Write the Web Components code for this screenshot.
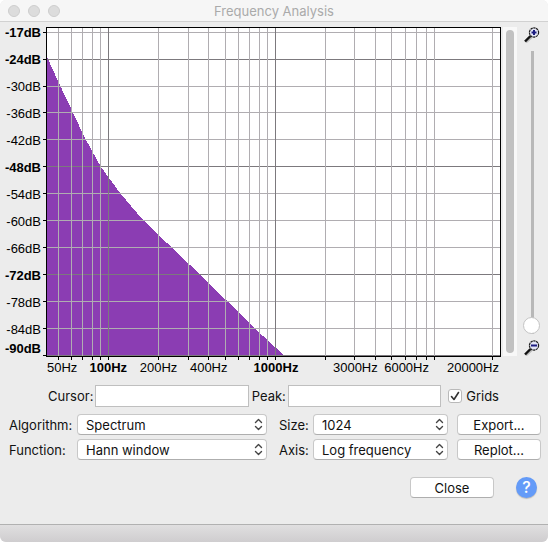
<!DOCTYPE html>
<html lang="en">
<head>
<meta charset="UTF-8">
<meta name="viewport" content="width=device-width, initial-scale=1.0">
<title>Frequency Analysis</title>
<style>
  body {
    margin: 0;
    background-color: #fff;
    color: #111;
    font-family: Inter, "Liberation Sans", sans-serif;
    font-size: 13px;
    line-height: 16px;
  }
</style>
</head>
<body>
<fa-window heading="Frequency Analysis">
  <fa-spectrum></fa-spectrum>
  <fa-scroll></fa-scroll>
  <fa-zoom></fa-zoom>

  <fa-field slot="readout" label="Cursor:"></fa-field>
  <fa-field slot="readout" label="Peak:"></fa-field>
  <fa-check slot="readout">Grids</fa-check>

  <fa-select slot="options" label="Algorithm:">
    <option>Spectrum</option>
    <option>Standard Autocorrelation</option>
    <option>Cepstrum</option>
  </fa-select>
  <fa-select slot="options" label="Size:">
    <option>1024</option>
    <option>2048</option>
    <option>4096</option>
  </fa-select>
  <fa-button slot="options">Export...</fa-button>
  <fa-select slot="options" label="Function:">
    <option>Hann window</option>
    <option>Hamming window</option>
  </fa-select>
  <fa-select slot="options" label="Axis:">
    <option>Log frequency</option>
    <option>Linear frequency</option>
  </fa-select>
  <fa-button slot="options">Replot...</fa-button>

  <fa-button slot="actions">Close</fa-button>
  <fa-help slot="actions"></fa-help>
</fa-window>

<script>
const BASE_STYLE = /*CSS*/ `
  * {
    box-sizing: border-box;
    margin: 0;
    padding: 0;
  }

  button, input, select {
    color: inherit;
    font: inherit;
  }
`

class BaseElement extends HTMLElement {
  constructor() {
    super()
    this.attachShadow({ mode: 'open' })
    const template = document.createElement('template')
    template.innerHTML = `<style>${BASE_STYLE}</style>${this.render()}`
    this.shadowRoot.appendChild(template.content.cloneNode(true))
  }
}

class FaWindow extends BaseElement {
  render() {
    return /*HTML*/ `
      <style>
        :host {
          background-color: #ececec;
          border-radius: 6px;
          display: flex;
          flex-direction: column;
          min-height: 100vh;
          overflow: hidden;
        }

        header {
          align-items: center;
          background-color: #f6f6f6;
          border-bottom: 1px solid #d1d1d1;
          display: grid;
          grid-template-columns: 60px 1fr 60px;
          height: 22px;
          padding-inline: 8px;
        }

        .lights {
          display: flex;
          gap: 8px;
        }

        .lights i {
          background-color: #dcdcdc;
          border: 1px solid #cdcdcd;
          border-radius: 50%;
          height: 12px;
          width: 12px;
        }

        h1 {
          color: #aaa;
          font-size: 13px;
          font-weight: 400;
          text-align: center;
        }

        .graph {
          display: flex;
          padding: 5px 7px 0 4px;
        }

        .readout {
          align-items: center;
          display: flex;
          gap: 3px;
          padding: 9px 49px 7px 48px;
        }

        .options {
          align-items: center;
          display: grid;
          gap: 4px 0;
          grid-template-columns: 68px 190fr 46px 135fr 93px;
          padding-inline: 9px 7px;
        }

        .options ::slotted(fa-button) {
          margin-left: 9px;
        }

        .actions {
          align-items: center;
          display: flex;
          gap: 22px;
          justify-content: flex-end;
          padding: 17px 11px 24px;
        }

        footer {
          background: linear-gradient(#e0dfe0, #cfcdcf);
          border-top: 1px solid #b1b1b1;
          height: 18px;
          margin-top: auto;
        }
      </style>

      <header>
        <div class="lights"><i></i><i></i><i></i></div>
        <h1></h1>
      </header>
      <div class="graph"><slot></slot></div>
      <div class="readout"><slot name="readout"></slot></div>
      <div class="options"><slot name="options"></slot></div>
      <div class="actions"><slot name="actions"></slot></div>
      <footer></footer>
    `
  }

  connectedCallback() {
    this.shadowRoot.querySelector('h1').textContent = this.getAttribute('heading')
  }
}

// Grid lines, in units of the plot's viewBox
const COLUMNS = [15, 28, 39, 49, 57, 65, 115, 145, 165, 182, 195, 206, 216, 224, 232, 282, 311, 332, 348, 362, 373, 383, 391, 449]
const MAJOR_COLUMNS = [65, 232]
const ROWS = [5, 32, 59, 85, 112, 139, 166, 193, 220, 247, 274, 301, 328]
const MAJOR_ROWS = [32, 139, 247, 328]

class FaSpectrum extends BaseElement {
  render() {
    const levels = [-17, -24, -30, -36, -42, -48, -54, -60, -66, -72, -78, -84, -90]
    const boldLevels = [-17, -24, -48, -72, -90]
    const vertical = (x, y1, y2, name) => `<path class="${name}" d="M${x + 0.5} ${y1}V${y2}"/>`
    const horizontal = (y, x1, x2, name) => `<path class="${name}" d="M${x1} ${y + 0.5}H${x2}"/>`

    return /*HTML*/ `
      <style>
        :host {
          color: #000;
          display: grid;
          flex: 1;
          font-family: "Liberation Sans", Arial, sans-serif;
          grid-template-columns: 39px minmax(0, 1fr);
          line-height: 12px;
        }

        ol {
          list-style: none;
        }

        .levels li {
          align-items: center;
          display: flex;
          height: 27px;
          justify-content: flex-end;
          padding-right: 2px;
        }

        .levels li:first-child {
          align-items: flex-start;
          height: 19px;
        }

        .levels li:last-child {
          height: 12px;
        }

        svg {
          display: block;
          height: 333px;
          shape-rendering: crispEdges;
          width: 100%;
        }

        path {
          fill: none;
          vector-effect: non-scaling-stroke;
        }

        .curve {
          fill: #8b3db3;
        }

        .minor {
          stroke: #b0adb1;
        }

        .major {
          stroke: #7c797d;
        }

        .tick {
          stroke: #000;
        }

        .frequencies {
          display: grid;
          grid-column: 2;
          grid-template-columns: 4fr 36fr 50fr 50fr 50fr 84fr 12fr 50fr 52fr 68fr;
          line-height: 16px;
          white-space: nowrap;
        }

        .frequencies li {
          display: flex;
          justify-content: center;
          min-width: 0;
        }

        .frequencies li:first-child {
          grid-column: 2;
          justify-content: flex-start;
        }

        .frequencies .after-gap {
          grid-column: 8;
        }

        .frequencies li:last-child {
          justify-content: flex-end;
          padding-right: 2px;
        }

        .bold {
          font-weight: 700;
        }
      </style>

      <ol class="levels">
        ${levels.map((level) => `<li class="${boldLevels.includes(level) ? 'bold' : ''}">${level}dB</li>`).join('')}
      </ol>
      <svg viewBox="0 0 458 333" preserveAspectRatio="none" aria-hidden="true">
        <rect x="3" width="455" height="330" fill="#fff"/>
        <path class="curve" d="M4 30L15 54L33 92L40 107L49 124L58 140L69 155L77 166L100 193L147 238L165 256L182 272L207 297L232 320L241 329H4Z"/>
        ${ROWS.map((y) => horizontal(y, 4, 457, MAJOR_ROWS.includes(y) ? 'major' : 'minor')).join('')}
        ${COLUMNS.map((x) => vertical(x, 1, 329, MAJOR_COLUMNS.includes(x) ? 'major' : 'minor')).join('')}
        ${ROWS.map((y) => horizontal(y, 0, 4, 'tick')).join('')}
        ${COLUMNS.map((x) => vertical(x, 329, MAJOR_COLUMNS.includes(x) ? 334 : 333, 'tick')).join('')}
        <path class="tick" d="M3.5 .5H457.5V329.5H3.5Z"/>
      </svg>
      <ol class="frequencies">
        <li>50Hz</li>
        <li class="bold">100Hz</li>
        <li>200Hz</li>
        <li>400Hz</li>
        <li class="bold">1000Hz</li>
        <li class="after-gap">3000Hz</li>
        <li>6000Hz</li>
        <li>20000Hz</li>
      </ol>
    `
  }
}

class FaScroll extends BaseElement {
  render() {
    return /*HTML*/ `
      <style>
        :host {
          background-color: #f8f8f8;
          box-sizing: border-box;
          display: flex;
          height: 329px;
          justify-content: center;
          margin-left: 2px;
          padding-block: 3px;
          width: 14px;
        }

        .thumb {
          background-color: #c1c1c1;
          border-radius: 4px;
          width: 8px;
        }
      </style>
      <div class="thumb"></div>
    `
  }
}

class FaZoom extends BaseElement {
  render() {
    const glass = (sign) => /*HTML*/ `
      <svg width="16" height="16" viewBox="0 0 16 16" aria-hidden="true">
        <path d="M2 15.5L8 10" stroke="#bbb" stroke-width="2"/>
        <path d="M1 14.5L6.5 9" stroke="#111" stroke-width="2.4"/>
        <circle cx="10" cy="5.5" r="4.6" fill="#e4e6f6" stroke="#222" stroke-width="1.2" stroke-dasharray="2.4 .5"/>
        <path d="${sign}" stroke="#1c1c80" stroke-width="2"/>
      </svg>
    `
    return /*HTML*/ `
      <style>
        :host {
          align-items: center;
          display: flex;
          flex-direction: column;
          height: 329px;
          margin-left: 6px;
          width: 18px;
        }

        svg {
          display: block;
          flex: none;
        }

        input {
          appearance: none;
          background: none;
          direction: rtl;
          flex: 1;
          margin-bottom: 6px;
          margin-top: 8px;
          min-height: 0;
          width: 18px;
          writing-mode: vertical-lr;
        }

        input::-webkit-slider-runnable-track {
          background: linear-gradient(#b8b8b8, #b8b8b8) center / 3px 100% no-repeat;
          width: 18px;
        }

        input::-webkit-slider-thumb {
          appearance: none;
          background-color: #fff;
          border: 1px solid #c4c4c4;
          border-radius: 50%;
          height: 17px;
          width: 17px;
        }
      </style>
      ${glass('M7.5 5.5H12.5M10 3V8')}
      <input type="range" aria-label="Zoom" value="0">
      ${glass('M7 5.5H13')}
    `
  }
}

class FaField extends BaseElement {
  render() {
    return /*HTML*/ `
      <style>
        :host {
          align-items: center;
          display: flex;
          flex: 1 1 auto;
          gap: 2px;
        }

        input {
          background-color: #fff;
          border: 1px solid #bfbfbf;
          flex: 1;
          height: 22px;
          min-width: 0;
          padding-inline: 4px;
          width: 140px;
        }
      </style>
      <label for="field"></label>
      <input id="field" type="text" readonly>
    `
  }

  connectedCallback() {
    this.shadowRoot.querySelector('label').textContent = this.getAttribute('label')
  }
}

class FaCheck extends BaseElement {
  render() {
    return /*HTML*/ `
      <style>
        :host {
          display: block;
          margin-left: 4px;
        }

        label {
          align-items: center;
          display: flex;
          gap: 4px;
        }

        .box {
          display: grid;
        }

        input, svg {
          grid-area: 1 / 1;
          height: 14px;
          width: 14px;
        }

        input {
          appearance: none;
          background-color: #fff;
          border: 1px solid #b9b9b9;
          border-radius: 3px;
        }

        svg {
          pointer-events: none;
          z-index: 1;
        }

        input:not(:checked) + svg {
          display: none;
        }
      </style>
      <label>
        <span class="box">
          <input type="checkbox" checked>
          <svg viewBox="0 0 14 14" fill="none">
            <path d="M3.5 7.5L6 10.5L10.5 3.5" stroke="#333" stroke-width="1.6" stroke-linecap="round" stroke-linejoin="round"/>
          </svg>
        </span>
        <slot></slot>
      </label>
    `
  }
}

class FaSelect extends BaseElement {
  render() {
    return /*HTML*/ `
      <style>
        :host {
          display: contents;
        }

        .popup {
          display: grid;
        }

        .popup > * {
          grid-area: 1 / 1;
        }

        select {
          appearance: none;
          background-color: #fff;
          border: 1px solid #c8c8c8;
          border-bottom-color: #aeaeae;
          border-radius: 4px;
          height: 21px;
          min-width: 0;
          outline: none;
          padding-inline: 8px 20px;
          width: 100%;
        }

        svg {
          align-self: center;
          justify-self: end;
          margin-right: 4px;
          pointer-events: none;
        }

        .short {
          padding-left: 12px;
        }
      </style>
      <label for="select"></label>
      <div class="popup">
        <select id="select"></select>
        <svg width="9" height="13" viewBox="0 0 9 13" fill="none">
          <path d="M1.5 4.5L4.5 1.5L7.5 4.5M1.5 8.5L4.5 11.5L7.5 8.5" stroke="#444" stroke-width="1.4" stroke-linecap="round" stroke-linejoin="round"/>
        </svg>
      </div>
    `
  }

  connectedCallback() {
    const label = this.shadowRoot.querySelector('label')
    label.textContent = this.getAttribute('label')
    // the second column of labels follows a pop-up, so it needs a gap
    label.classList.toggle('short', label.textContent.length < 6)
    this.shadowRoot.querySelector('select').append(...this.querySelectorAll('option'))
  }
}

class FaButton extends BaseElement {
  render() {
    return /*HTML*/ `
      <style>
        :host {
          display: block;
          min-width: 84px;
        }

        button {
          background-color: #fff;
          border: 1px solid #c8c8c8;
          border-bottom-color: #aeaeae;
          border-radius: 4px;
          display: block;
          height: 21px;
          width: 100%;
        }
      </style>
      <button type="button"><slot></slot></button>
    `
  }
}

class FaHelp extends BaseElement {
  render() {
    return /*HTML*/ `
      <style>
        :host {
          display: block;
        }

        button {
          background-color: #649bf8;
          border: none;
          border-radius: 50%;
          box-shadow: 0 1px 1px #bbb;
          color: #fff;
          display: block;
          font-size: 16px;
          font-weight: 500;
          height: 21px;
          line-height: 21px;
          width: 21px;
        }
      </style>
      <button type="button" aria-label="Help">?</button>
    `
  }
}

customElements.define('fa-window', FaWindow)
customElements.define('fa-spectrum', FaSpectrum)
customElements.define('fa-scroll', FaScroll)
customElements.define('fa-zoom', FaZoom)
customElements.define('fa-field', FaField)
customElements.define('fa-check', FaCheck)
customElements.define('fa-select', FaSelect)
customElements.define('fa-button', FaButton)
customElements.define('fa-help', FaHelp)
</script>
</body>
</html>
